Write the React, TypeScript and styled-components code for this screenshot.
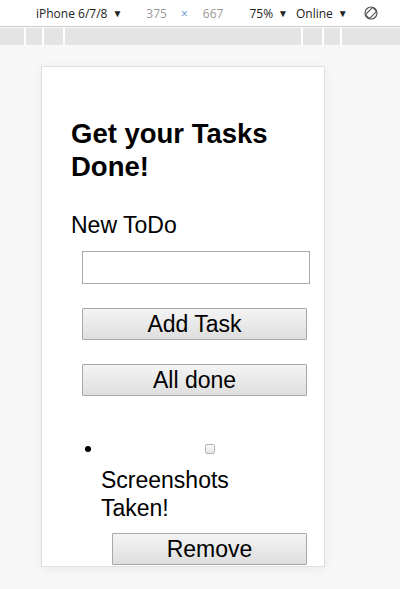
import { useState } from "react";
import styled, { createGlobalStyle } from "styled-components";

const GlobalStyle = createGlobalStyle`
  html, body {
    margin: 0;
    padding: 0;
    background: #f7f7f7;
  }
  body {
    width: 400px;
    height: 589px;
    overflow: hidden;
  }
`;

const Toolbar = styled.div`
  display: flex;
  align-items: center;
  height: 27px;
  padding-left: 36px;
  background: #ffffff;
  border-bottom: 1px solid #cbcbcb;
  font-family: "Open Sans", "Liberation Sans", sans-serif;
  font-size: 12px;
  color: #222;
  box-sizing: border-box;
`;

const ToolItem = styled.span<{ $muted?: boolean; $left?: number }>`
  display: inline-flex;
  align-items: center;
  margin-left: ${(p) => p.$left ?? 0}px;
  color: ${(p) => (p.$muted ? "#999" : "#222")};
  white-space: nowrap;
`;

const Caret = styled.span`
  font-size: 10px;
  margin-left: 5px;
`;

const Times = styled.span`
  margin-left: 14px;
  color: #5a8fd0;
  font-size: 12px;
`;

const Ruler = styled.div`
  display: flex;
  gap: 2px;
  height: 17px;
  margin-top: 1px;
  background: #ffffff;
`;

const RulerSeg = styled.div<{ $w?: number }>`
  background: #e4e4e4;
  flex: ${(p) => (p.$w ? `0 0 ${p.$w}px` : "1 1 auto")};
`;

const Stage = styled.div`
  padding-top: 21px;
  padding-left: 41px;
`;

const Device = styled.div`
  width: 284px;
  height: 501px;
  box-sizing: border-box;
  background: #fff;
  border: 1px solid #e0e0e0;
  box-shadow: 0 2px 10px rgba(0, 0, 0, 0.06);
  overflow: hidden;
  padding: 50px 6px 0 29px;
  font-family: "Liberation Sans", Arial, sans-serif;
  color: #000;
`;

const Title = styled.h1`
  margin: 0;
  font-size: 27.5px;
  line-height: 33px;
  font-weight: bold;
`;

const Label = styled.div`
  margin-top: 29px;
  font-size: 23px;
  line-height: 26px;
`;

const Form = styled.div`
  margin-left: 11px;
  display: flex;
  flex-direction: column;
  align-items: flex-start;
`;

const TextInput = styled.input`
  margin-top: 13px;
  width: 228px;
  height: 33px;
  box-sizing: border-box;
  border: 1px solid #a9a9a9;
  padding: 0 4px;
  font-size: 20px;
  font-family: inherit;
  outline: none;
`;

const Button = styled.button<{ $width: number }>`
  width: ${(p) => p.$width}px;
  height: 32px;
  box-sizing: border-box;
  border: 1px solid #a8a8a8;
  border-radius: 1px;
  background: linear-gradient(#f4f4f4, #dedede);
  font-family: "Liberation Sans", Arial, sans-serif;
  font-size: 23px;
  line-height: 28px;
  color: #000;
  padding: 0;
  cursor: pointer;
`;

const FormButton = styled(Button)`
  margin-top: 24px;
`;

const List = styled.ul`
  margin: 42px 0 0;
  padding-left: 30px;
`;

const Item = styled.li`
  font-size: 23px;
  line-height: 28px;
  list-style: none;
  position: relative;
  &::before {
    content: "";
    position: absolute;
    left: -16px;
    top: 8px;
    width: 6px;
    height: 6px;
    border-radius: 50%;
    background: #000;
  }
`;

const CheckRow = styled.div`
  display: flex;
  justify-content: center;
  height: 22px;
  align-items: center;
  margin-bottom: 6px;
`;

const Check = styled.input`
  appearance: none;
  width: 10px;
  height: 10px;
  margin: 0;
  border: 1px solid #b4b4b4;
  border-radius: 2px;
  background: linear-gradient(#fafafa, #e6e6e6);
`;

const RemoveButton = styled(Button)`
  margin-left: 11px;
  margin-top: 11px;
`;

export default function App() {
  const [todo, setTodo] = useState("");
  const [done, setDone] = useState(false);
  return (
    <>
      <GlobalStyle />
      <Toolbar>
        <ToolItem>
          iPhone 6/7/8<Caret>▼</Caret>
        </ToolItem>
        <ToolItem $muted $left={24}>375</ToolItem>
        <Times>×</Times>
        <ToolItem $muted $left={15}>667</ToolItem>
        <ToolItem $left={26}>
          75%<Caret>▼</Caret>
        </ToolItem>
        <ToolItem $left={8}>
          Online<Caret>▼</Caret>
        </ToolItem>
        <ToolItem $left={16}>
          <svg width="14" height="14" viewBox="0 0 14 14" fill="none" stroke="#555" strokeWidth="1.2">
            <circle cx="7" cy="7" r="6" />
            <rect x="4.2" y="1.8" width="5.6" height="10.4" rx="0.8" transform="rotate(45 7 7)" />
          </svg>
        </ToolItem>
      </Toolbar>
      <Ruler>
        <RulerSeg $w={24} />
        <RulerSeg $w={16} />
        <RulerSeg $w={19} />
        <RulerSeg $w={236} />
        <RulerSeg $w={19} />
        <RulerSeg $w={16} />
        <RulerSeg />
      </Ruler>
      <Stage>
        <Device>
          <Title>Get your Tasks Done!</Title>
          <Label>New ToDo</Label>
          <Form>
            <TextInput value={todo} onChange={(e) => setTodo(e.target.value)} />
            <FormButton $width={225}>Add Task</FormButton>
            <FormButton $width={225}>All done</FormButton>
          </Form>
          <List>
            <Item>
              <CheckRow>
                <Check type="checkbox" checked={done} onChange={() => setDone(!done)} />
              </CheckRow>
              Screenshots
              <br />
              Taken!
              <br />
              <RemoveButton $width={195}>Remove</RemoveButton>
            </Item>
          </List>
        </Device>
      </Stage>
    </>
  );
}
